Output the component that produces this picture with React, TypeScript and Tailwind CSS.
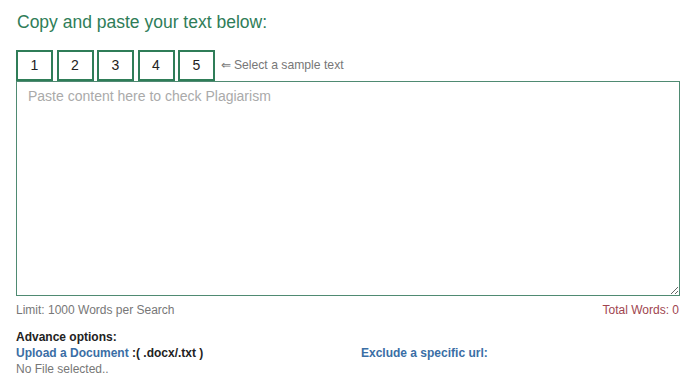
const SAMPLES = ["1", "2", "3", "4", "5"];

export default function App() {
  return (
    <div className="h-[383px] w-[700px] bg-white px-4 pt-[10px] font-['Liberation_Sans',Arial,sans-serif]">
      <h1 className="pl-px text-[17.5px] leading-[24px] text-[#2f7d58]">
        Copy and paste your text below:
      </h1>

      <div className="mt-[16px] flex items-center">
        {SAMPLES.map((s) => (
          <button
            key={s}
            className="mr-[3.5px] h-[31px] w-[37px] border-2 border-[#2f7d58] text-[14px] text-[#222]"
          >
            {s}
          </button>
        ))}
        <span className="ml-[2px] text-[12.2px] text-[#777]">⇐ Select a sample text</span>
      </div>

      <textarea
        placeholder="Paste content here to check Plagiarism"
        className="block h-[215px] w-[664px] resize-y border border-[#4f8a72] px-[11px] py-[4px] text-[14px] text-[#333] outline-none placeholder:text-[#aaa]"
      />

      <div className="mt-[6px] flex justify-between text-[12px] leading-[16px]">
        <span className="text-[#777]">Limit: 1000 Words per Search</span>
        <span className="pr-[5px] text-[#a0454f]">Total Words: 0</span>
      </div>

      <div className="mt-[11px] text-[12px] leading-[16px]">
        <p className="font-bold text-[#222]">Advance options:</p>
        <div className="flex">
          <div className="w-[345px]">
            <p className="font-bold text-[#3a6ea5]">
              Upload a Document <span className="text-[#222]">:( .docx/.txt )</span>
            </p>
            <p className="text-[#777]">No File selected..</p>
          </div>
          <p className="font-bold text-[#3a6ea5]">Exclude a specific url:</p>
        </div>
      </div>
    </div>
  );
}
